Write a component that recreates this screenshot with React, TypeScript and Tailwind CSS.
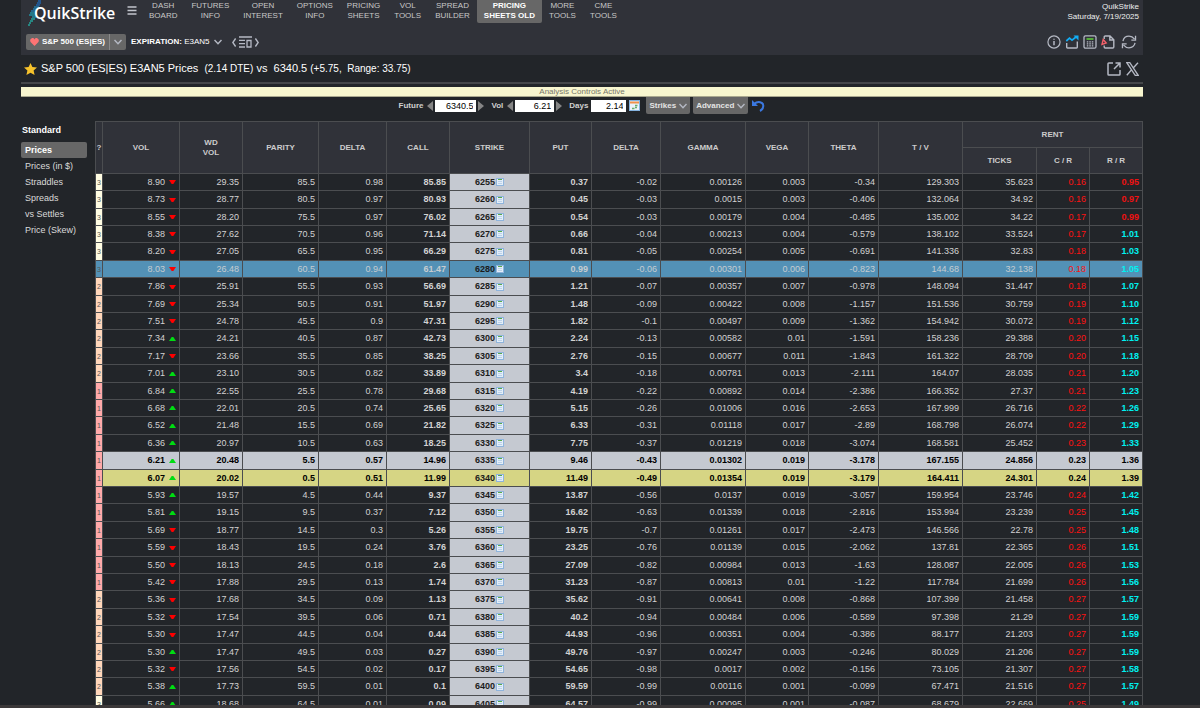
import { ReactNode } from "react";

type Row = [string, string, string, string, string, string, string, string, string, string, string, string, string, string, string, string, string];

// dev, vol, direction, wd vol, parity, delta, call, strike, put, delta, gamma, vega, theta, t/v, ticks, c/r, r/r
const data = `
3 8.90 d 29.35 85.5 0.98 85.85 6255 0.37 -0.02 0.00126 0.003 -0.34 129.303 35.623 0.16 0.95
3 8.73 d 28.77 80.5 0.97 80.93 6260 0.45 -0.03 0.0015 0.003 -0.406 132.064 34.92 0.16 0.97
3 8.55 d 28.20 75.5 0.97 76.02 6265 0.54 -0.03 0.00179 0.004 -0.485 135.002 34.22 0.17 0.99
3 8.38 d 27.62 70.5 0.96 71.14 6270 0.66 -0.04 0.00213 0.004 -0.579 138.102 33.524 0.17 1.01
3 8.20 d 27.05 65.5 0.95 66.29 6275 0.81 -0.05 0.00254 0.005 -0.691 141.336 32.83 0.18 1.03
3 8.03 d 26.48 60.5 0.94 61.47 6280 0.99 -0.06 0.00301 0.006 -0.823 144.68 32.138 0.18 1.05
2 7.86 d 25.91 55.5 0.93 56.69 6285 1.21 -0.07 0.00357 0.007 -0.978 148.094 31.447 0.18 1.07
2 7.69 d 25.34 50.5 0.91 51.97 6290 1.48 -0.09 0.00422 0.008 -1.157 151.536 30.759 0.19 1.10
2 7.51 d 24.78 45.5 0.9 47.31 6295 1.82 -0.1 0.00497 0.009 -1.362 154.942 30.072 0.19 1.12
2 7.34 u 24.21 40.5 0.87 42.73 6300 2.24 -0.13 0.00582 0.01 -1.591 158.236 29.388 0.20 1.15
2 7.17 d 23.66 35.5 0.85 38.25 6305 2.76 -0.15 0.00677 0.011 -1.843 161.322 28.709 0.20 1.18
2 7.01 u 23.10 30.5 0.82 33.89 6310 3.4 -0.18 0.00781 0.013 -2.111 164.07 28.035 0.21 1.20
1 6.84 u 22.55 25.5 0.78 29.68 6315 4.19 -0.22 0.00892 0.014 -2.386 166.352 27.37 0.21 1.23
1 6.68 u 22.01 20.5 0.74 25.65 6320 5.15 -0.26 0.01006 0.016 -2.653 167.999 26.716 0.22 1.26
1 6.52 u 21.48 15.5 0.69 21.82 6325 6.33 -0.31 0.01118 0.017 -2.89 168.798 26.074 0.22 1.29
1 6.36 u 20.97 10.5 0.63 18.25 6330 7.75 -0.37 0.01219 0.018 -3.074 168.581 25.452 0.23 1.33
1 6.21 u 20.48 5.5 0.57 14.96 6335 9.46 -0.43 0.01302 0.019 -3.178 167.155 24.856 0.23 1.36
1 6.07 u 20.02 0.5 0.51 11.99 6340 11.49 -0.49 0.01354 0.019 -3.179 164.411 24.301 0.24 1.39
1 5.93 u 19.57 4.5 0.44 9.37 6345 13.87 -0.56 0.0137 0.019 -3.057 159.954 23.746 0.24 1.42
1 5.81 u 19.15 9.5 0.37 7.12 6350 16.62 -0.63 0.01339 0.018 -2.816 153.994 23.239 0.25 1.45
1 5.69 d 18.77 14.5 0.3 5.26 6355 19.75 -0.7 0.01261 0.017 -2.473 146.566 22.78 0.25 1.48
1 5.59 d 18.43 19.5 0.24 3.76 6360 23.25 -0.76 0.01139 0.015 -2.062 137.81 22.365 0.26 1.51
1 5.50 d 18.13 24.5 0.18 2.6 6365 27.09 -0.82 0.00984 0.013 -1.63 128.087 22.005 0.26 1.53
1 5.42 d 17.88 29.5 0.13 1.74 6370 31.23 -0.87 0.00813 0.01 -1.22 117.784 21.699 0.26 1.56
2 5.36 d 17.68 34.5 0.09 1.13 6375 35.62 -0.91 0.00641 0.008 -0.868 107.399 21.458 0.27 1.57
2 5.32 d 17.54 39.5 0.06 0.71 6380 40.2 -0.94 0.00484 0.006 -0.589 97.398 21.29 0.27 1.59
2 5.30 d 17.47 44.5 0.04 0.44 6385 44.93 -0.96 0.00351 0.004 -0.386 88.177 21.203 0.27 1.59
2 5.30 u 17.47 49.5 0.03 0.27 6390 49.76 -0.97 0.00247 0.003 -0.246 80.029 21.206 0.27 1.59
2 5.32 d 17.56 54.5 0.02 0.17 6395 54.65 -0.98 0.0017 0.002 -0.156 73.105 21.307 0.27 1.58
2 5.38 u 17.73 59.5 0.01 0.1 6400 59.59 -0.99 0.00116 0.001 -0.099 67.471 21.516 0.27 1.57
3 5.66 u 18.68 64.5 0.01 0.09 6405 64.57 -0.99 0.00095 0.001 -0.087 68.679 22.669 0.25 1.49
`;

const rows = data
  .trim()
  .split("\n")
  .map((line) => line.split(" ") as Row);

const navItems = [
  ["DASH", "BOARD"],
  ["FUTURES", "INFO"],
  ["OPEN", "INTEREST"],
  ["OPTIONS", "INFO"],
  ["PRICING", "SHEETS"],
  ["VOL", "TOOLS"],
  ["SPREAD", "BUILDER"],
  ["PRICING", "SHEETS OLD"],
  ["MORE", "TOOLS"],
  ["CME", "TOOLS"],
];

const views = ["Prices", "Prices (in $)", "Straddles", "Spreads", "vs Settles", "Price (Skew)"];

const colWidths = [
  "w-[7px]",
  "w-[77px]",
  "w-[63px]",
  "w-[76px]",
  "w-[68px]",
  "w-[63px]",
  "w-[80px]",
  "w-[62px]",
  "w-[69px]",
  "w-[85px]",
  "w-[63px]",
  "w-[70px]",
  "w-[84px]",
  "w-[74px]",
  "w-[53px]",
  "w-[53px]",
];

const devColors: Record<string, string> = {
  "1": "bg-[#ffa9a9]",
  "2": "bg-[#ffd6ba]",
  "3": "bg-[#fffce2]",
};

function Chevron() {
  return (
    <svg className="w-2 h-2" viewBox="0 0 8 8" fill="none" stroke="#b5b9c4" strokeWidth="1.4">
      <path d="M0.5 2L4 5.8L7.5 2" />
    </svg>
  );
}

function Logo() {
  return (
    <a href="#" className="relative flex items-center h-[26px] w-[90px] pl-[6px]" aria-label="QuikStrike home">
      <svg className="absolute left-0 top-0 w-[16px] h-[26px]" viewBox="0 0 16 26">
        <g strokeWidth="1.4" fill="none">
          <path d="M10 1H13M9 3H13M8 5H12" stroke="#1f62a8" />
          <path d="M6 7H11M5 9H10M3 11H9" stroke="#2079a5" />
          <path d="M2 13H9M1 15H8M4 17H8" stroke="#1f8fa0" />
          <path d="M3 19H7M2 21H5M1 23H3M0 25H2" stroke="#25a39b" />
        </g>
      </svg>
      <span className="relative font-['Open_Sans'] font-semibold text-[16px] leading-[26px] text-white">
        QuikStrike
      </span>
    </a>
  );
}

function SheetIcon() {
  return (
    <svg className="w-2 h-2" viewBox="0 0 8 8" shapeRendering="crispEdges">
      <rect width="8" height="8" fill="#8fb4dc" />
      <rect x="1" y="1" width="6" height="6" fill="#e4eef8" />
      <path d="M2 1.5H6" stroke="#57a84c" />
      <path d="M2 3.5H6M2 5.5H6" stroke="#bcd2ea" />
    </svg>
  );
}

function Direction({ dir }: { dir: string }) {
  return (
    <svg className="w-[7px] h-1" viewBox="0 0 7 4">
      {dir === "u" ? <path d="M0 4L2.7 0H4.3L7 4Z" fill="#00dd12" /> : <path d="M0 0H7L4.3 4H2.7Z" fill="#ff0000" />}
    </svg>
  );
}

function Arrow({ label, left }: { label: string; left?: boolean }) {
  return (
    <button type="button" aria-label={label}>
      <svg className="w-[6px] h-[10px]" viewBox="0 0 6 10" fill="#858585">
        <path d={left ? "M6 0V10L0 5Z" : "M0 0V10L6 5Z"} />
      </svg>
    </button>
  );
}

function NumberBox({ id, value, width }: { id: string; value: string; width: string }) {
  return (
    <input
      id={id}
      type="text"
      defaultValue={value}
      className={`${width} h-3 px-[3px] bg-white text-black text-right text-[9px] leading-3 font-normal`}
    />
  );
}

function IconButton({ label, children }: { label: string; children: ReactNode }) {
  return (
    <button type="button" aria-label={label}>
      {children}
    </button>
  );
}

function Header() {
  return (
    <header className="shrink-0 bg-[#303239] h-[55px] flex flex-col justify-between">
      <div className="flex items-start justify-between">
        <div className="flex items-start pl-[7px]">
          <Logo />
          <button type="button" aria-label="Menu" className="ml-[9px] mt-[6px]">
            <svg className="w-[10px] h-[9px]" viewBox="0 0 10 9" stroke="#c2c5cd" strokeWidth="1.4">
              <path d="M0.5 1H9.5M0.5 4.5H9.5M0.5 8H9.5" />
            </svg>
          </button>
          <nav className="flex ml-[5px]">
            {navItems.map(([top, bottom], i) => (
              <a
                key={i}
                href="#"
                className={
                  i === 7
                    ? "px-[7px] pt-px pb-[2px] text-center text-[8px] leading-[10px] rounded-b-xs bg-[#676767] text-white font-bold"
                    : "px-[7px] pt-px pb-[2px] text-center text-[8px] leading-[10px] text-[#c8c8c8]"
                }
              >
                {top}
                <br />
                {bottom}
              </a>
            ))}
          </nav>
        </div>
        <div className="pt-[2px] pr-1 text-right text-[8px] leading-[10px] text-[#eeeeee]">
          <p>QuikStrike</p>
          <p>Saturday, 7/19/2025</p>
        </div>
      </div>
      <div className="flex items-center justify-between pb-[5px] pl-[5px] pr-[6px]">
        <div className="flex items-center">
          <div className="flex h-4 rounded-xs bg-[#676767] text-white text-[8px] font-bold">
            <button type="button" className="flex items-center gap-[3px] px-1">
              <svg className="w-[9px] h-2" viewBox="0 0 9 8" fill="#ff7474">
                <path d="M4.5 8L0.8 4.3C-0.3 3 0 0.8 1.8 0.2C3 -0.1 4 0.5 4.5 1.4C5 0.5 6 -0.1 7.2 0.2C9 0.8 9.3 3 8.2 4.3Z" />
              </svg>
              S&amp;P 500 (ES|ES)
            </button>
            <button type="button" aria-label="Choose product" className="flex items-center px-1 border-l border-[#8a8a8a]">
              <Chevron />
            </button>
          </div>
          <button type="button" className="flex items-center gap-1 ml-[5px] text-white text-[8px]">
            <span>
              <b>EXPIRATION:</b> E3AN5
            </span>
            <Chevron />
          </button>
          <div className="flex items-center gap-[3px] ml-[10px]">
            <IconButton label="Previous expiration">
              <svg className="w-1 h-[9px]" viewBox="0 0 4 9" fill="none" stroke="#b5b9c4" strokeWidth="1.4">
                <path d="M3.6 0.5L0.8 4.5L3.6 8.5" />
              </svg>
            </IconButton>
            <IconButton label="Expiration list">
              <svg className="w-[13px] h-3" viewBox="0 0 13 12" fill="none" stroke="#b5b9c4" strokeWidth="1.3">
                <path d="M0 1H13M0 4.3H6M0 7.6H6M0 11H6M8 4.5H12V11H8Z" />
              </svg>
            </IconButton>
            <IconButton label="Next expiration">
              <svg className="w-1 h-[9px]" viewBox="0 0 4 9" fill="none" stroke="#b5b9c4" strokeWidth="1.4">
                <path d="M0.4 0.5L3.2 4.5L0.4 8.5" />
              </svg>
            </IconButton>
          </div>
        </div>
        <div className="flex items-center gap-1">
          <IconButton label="Information">
            <svg className="w-[14px] h-[14px]" viewBox="0 0 15 15" fill="none" stroke="#b5b9c4" strokeWidth="1.3">
              <circle cx="7.5" cy="7.5" r="6.5" />
              <path d="M7.5 6.5V11M7.5 4V5.2" strokeWidth="1.6" />
            </svg>
          </IconButton>
          <IconButton label="Chart">
            <svg className="w-[14px] h-[14px]" viewBox="0 0 14 14" fill="none" stroke="#b5b9c4" strokeWidth="1.4">
              <path d="M1.7 8V12.3C1.7 12.8 2 13 2.5 13H11.5C12 13 12.3 12.8 12.3 12.3V6.5" />
              <path d="M1.3 6L4.5 3.2L7 5.2L11 2" stroke="#12adf5" strokeWidth="1.7" />
              <path d="M8.5 0.5H13.5V5.5Z" fill="#12adf5" stroke="none" />
            </svg>
          </IconButton>
          <IconButton label="Calculator">
            <svg className="w-[14px] h-[14px]" viewBox="0 0 14 14" fill="none" stroke="#b5b9c4" strokeWidth="1.3">
              <rect x="1" y="0.8" width="12" height="12.4" rx="1.5" />
              <path d="M3.5 4H10.5" stroke="#5fc93c" strokeWidth="1.6" />
              <path d="M3.8 6.8H10.5M3.8 8.8H10.5M3.8 10.8H10.5" strokeDasharray="1.5 1" />
            </svg>
          </IconButton>
          <IconButton label="Export PDF">
            <svg className="w-[14px] h-[14px]" viewBox="0 0 14 14" fill="none" stroke="#b5b9c4" strokeWidth="1.4">
              <path d="M3.2 4V2C3.2 1.3 3.6 1 4.2 1H9L12.8 4.8V12C12.8 12.7 12.4 13 11.8 13H4.2C3.6 13 3.2 12.7 3.2 12V10.5M8.8 1V5H12.8" />
              <path d="M2.2 4.5L5.2 8L1 9.5Z" stroke="#f2606a" />
            </svg>
          </IconButton>
          <IconButton label="Refresh">
            <svg className="w-4 h-[14px] ml-[2px]" viewBox="0 0 16 15" fill="none" stroke="#b5b9c4" strokeWidth="1.4">
              <path d="M1.5 6.5C2.2 3.5 4.8 1.3 8 1.3C10.4 1.3 12.3 2.4 14 4.5M14.5 8.5C13.8 11.5 11.2 13.7 8 13.7C5.6 13.7 3.7 12.6 2 10.5" />
              <path d="M15 0.8V5.4H10.5M1 14.2V9.6H5.5" />
            </svg>
          </IconButton>
        </div>
      </div>
    </header>
  );
}

function TitleBar() {
  return (
    <div className="shrink-0 flex items-center justify-between h-[27px] pl-[3px] pr-1">
      <h1 className="flex items-center text-white text-[11px] leading-[14px] whitespace-pre">
        <svg className="w-[13px] h-3 mr-1" viewBox="0 0 13 12">
          <path d="M6.5 0L8.4 4L13 4.5L9.6 7.5L10.6 12L6.5 9.7L2.4 12L3.4 7.5L0 4.5L4.6 4Z" fill="#f6c22c" />
        </svg>
        <span>
          S&amp;P 500 (ES|ES) E3AN5 Prices  <span className="text-[10px]">(2.14 DTE)</span> vs  6340.5{" "}
          <span className="text-[10px]">(+5.75,  Range: 33.75)</span>
        </span>
      </h1>
      <div className="flex items-center gap-[5px]">
        <IconButton label="Open in new window">
          <svg className="w-[14px] h-[14px]" viewBox="0 0 14 14" fill="none" stroke="#b5b9c4" strokeWidth="1.5">
            <path d="M6 1H1.8C1.3 1 1 1.3 1 1.8V12.2C1 12.7 1.3 13 1.8 13H12.2C12.7 13 13 12.7 13 12.2V8M8.5 1H13V5.5M13 1L7 7" />
          </svg>
        </IconButton>
        <IconButton label="Share on X">
          <svg className="w-[13px] h-[14px]" viewBox="0 0 13 14" fill="none" stroke="#b5b9c4" strokeWidth="1.3">
            <path d="M0.8 0.7H3.8L12.2 13.3H9.2ZM12 0.7L7.2 6M5.6 7.8L0.8 13.3" />
          </svg>
        </IconButton>
      </div>
    </div>
  );
}

function Controls() {
  return (
    <form className="shrink-0 flex items-center justify-center h-[17px] text-[8px] font-bold text-[#d0d0d0]">
      <label htmlFor="future" className="mr-1">Future</label>
      <div className="flex items-center gap-[2px] mr-[7px]">
        <Arrow label="Lower future" left />
        <NumberBox id="future" value="6340.5" width="w-[41px]" />
        <Arrow label="Raise future" />
      </div>
      <label htmlFor="vol" className="mr-1">Vol</label>
      <div className="flex items-center gap-[2px] mr-[7px]">
        <Arrow label="Lower vol" left />
        <NumberBox id="vol" value="6.21" width="w-[39px]" />
        <Arrow label="Raise vol" />
      </div>
      <label htmlFor="days" className="mr-[3px]">Days</label>
      <NumberBox id="days" value="2.14" width="w-[35px]" />
      <button type="button" aria-label="Pick date" className="ml-[3px] mr-[6px]">
        <svg className="w-[11px] h-[11px]" viewBox="0 0 11 11">
          <rect x="0.5" y="0.5" width="10" height="10" fill="#eaf2fa" stroke="#85b3e0" />
          <path d="M1 2.5H10" stroke="#f0914a" strokeWidth="2" />
          <path d="M6 5.5H8.5M3 8.5H5.5M6 7.5H8" stroke="#69ad6c" strokeWidth="1.5" />
        </svg>
      </button>
      <button type="button" className="flex items-center gap-[3px] h-[17px] px-[3px] mr-[3px] rounded-b-xs bg-[#676767] text-[#e4e4e4]">
        Strikes <Chevron />
      </button>
      <button type="button" className="flex items-center gap-[3px] h-[17px] px-[3px] mr-1 rounded-b-xs bg-[#676767] text-[#e4e4e4]">
        Advanced <Chevron />
      </button>
      <button type="button" aria-label="Reset">
        <svg className="w-[13px] h-[13px]" viewBox="0 0 13 13" fill="none" stroke="#3b78e0" strokeWidth="2">
          <path d="M2 5C6 1.5 11.5 3 11.3 7C11.2 9.3 10 11 8 12" />
          <path d="M0 1V7H6Z" fill="#3b78e0" stroke="none" />
        </svg>
      </button>
    </form>
  );
}

function Sidebar() {
  return (
    <aside className="w-[74px] shrink-0 pr-2 pt-[2px] text-[9px]">
      <h2 className="h-[19px] pl-px leading-[14px] font-bold text-white">Standard</h2>
      <ul>
        {views.map((view, i) => (
          <li key={view}>
            <a
              href="#"
              className={
                i === 0
                  ? "block h-4 pl-1 leading-4 rounded-xs bg-[#676767] text-white font-bold"
                  : "block h-4 pl-1 leading-4 text-[#dadada]"
              }
            >
              {view}
            </a>
          </li>
        ))}
      </ul>
    </aside>
  );
}

function PriceRow({ row }: { row: Row }) {
  const [dev, vol, dir, wdVol, parity, callDelta, call, strike, put, putDelta, gamma, vega, theta, tv, ticks, cr, rr] = row;
  const hovered = strike === "6280";
  const atm = strike === "6340";
  const near = strike === "6335";
  const marked = atm || near;

  let rowStyle = "text-[#d2d2d2]";
  if (hovered) rowStyle = "bg-[#5391b6] text-[#c6ccd0]";
  if (near) rowStyle = "bg-[#c5c9d1] text-black font-bold";
  if (atm) rowStyle = "bg-[#d6d584] text-black font-bold";

  const cell = "border border-[#4b4d50] pr-[3px]";

  return (
    <tr className={`h-[17px] nth-[5n]:h-[18px] nth-[5n+2]:h-[18px] leading-[15px] text-right ${rowStyle}`}>
      <td className={`border border-[#4b4d50] text-center text-[7px] font-normal text-[#555555] ${hovered ? "" : devColors[dev]}`}>
        {dev}
      </td>
      <td className={cell}>
        <span className="flex items-center justify-end gap-1">
          {vol} <Direction dir={dir} />
        </span>
      </td>
      <td className={cell}>{wdVol}</td>
      <td className={cell}>{parity}</td>
      <td className={cell}>{callDelta}</td>
      <td className={`${cell} font-bold`}>{call}</td>
      <td className={`border border-[#4b4d50] font-bold text-[#1c1c1c] ${hovered || marked ? "" : "bg-[#c5c9d1]"}`}>
        <span className="flex items-center justify-center gap-px">
          {strike} <SheetIcon />
        </span>
      </td>
      <td className={`${cell} font-bold`}>{put}</td>
      <td className={cell}>{putDelta}</td>
      <td className={cell}>{gamma}</td>
      <td className={cell}>{vega}</td>
      <td className={cell}>{theta}</td>
      <td className={cell}>{tv}</td>
      <td className={cell}>{ticks}</td>
      <td className={`${cell} ${marked ? "" : "text-[#ff1111]"}`}>{cr}</td>
      <td className={`${cell} font-bold ${marked ? "" : Number(rr) < 1 ? "text-[#ee1111]" : "text-[#00f0f0]"}`}>{rr}</td>
    </tr>
  );
}

function PriceTable() {
  const th = "border border-[#4b4d50] font-bold";
  return (
    <table className="w-full table-fixed border-collapse text-[9px]">
      <colgroup>
        {colWidths.map((w, i) => (
          <col key={i} className={w} />
        ))}
      </colgroup>
      <thead className="bg-[#303239] text-[8px] leading-[10px] text-[#cccccc]">
        <tr className="h-[26px]">
          <th rowSpan={2} className={th}>?</th>
          <th rowSpan={2} className={th}>VOL</th>
          <th rowSpan={2} className={th}>WD<br />VOL</th>
          <th rowSpan={2} className={th}>PARITY</th>
          <th rowSpan={2} className={th}>DELTA</th>
          <th rowSpan={2} className={th}>CALL</th>
          <th rowSpan={2} className={th}>STRIKE</th>
          <th rowSpan={2} className={th}>PUT</th>
          <th rowSpan={2} className={th}>DELTA</th>
          <th rowSpan={2} className={th}>GAMMA</th>
          <th rowSpan={2} className={th}>VEGA</th>
          <th rowSpan={2} className={th}>THETA</th>
          <th rowSpan={2} className={th}>T / V</th>
          <th colSpan={3} className={th}>RENT</th>
        </tr>
        <tr className="h-[26px]">
          <th className={th}>TICKS</th>
          <th className={th}>C / R</th>
          <th className={th}>R / R</th>
        </tr>
      </thead>
      <tbody>
        {rows.map((row) => (
          <PriceRow key={row[7]} row={row} />
        ))}
      </tbody>
    </table>
  );
}

export default function App() {
  return (
    <div className="flex flex-col h-screen overflow-hidden bg-[#222529] font-['Liberation_Sans',Arial,sans-serif]">
      <div className="flex flex-col flex-1 min-h-0 overflow-hidden pl-[21px] pr-[57px]">
        <Header />
        <TitleBar />
        <div className="h-[2px] shrink-0 bg-[#45474a]" />
        {/* Banner shown while the what-if inputs are in use */}
        <p className="shrink-0 mt-[3px] h-[10px] border-b border-[#a9a88f] bg-[#f8f6cf] text-center text-[8px] leading-[10px] text-[#77776a]">
          Analysis Controls Active
        </p>
        <Controls />
        <main className="shrink-0 flex items-start pt-[7px]">
          <Sidebar />
          <div className="flex-1 min-w-0">
            <PriceTable />
          </div>
        </main>
      </div>
      <div className="h-[3px] shrink-0 bg-[#3b3839]" />
    </div>
  );
}
